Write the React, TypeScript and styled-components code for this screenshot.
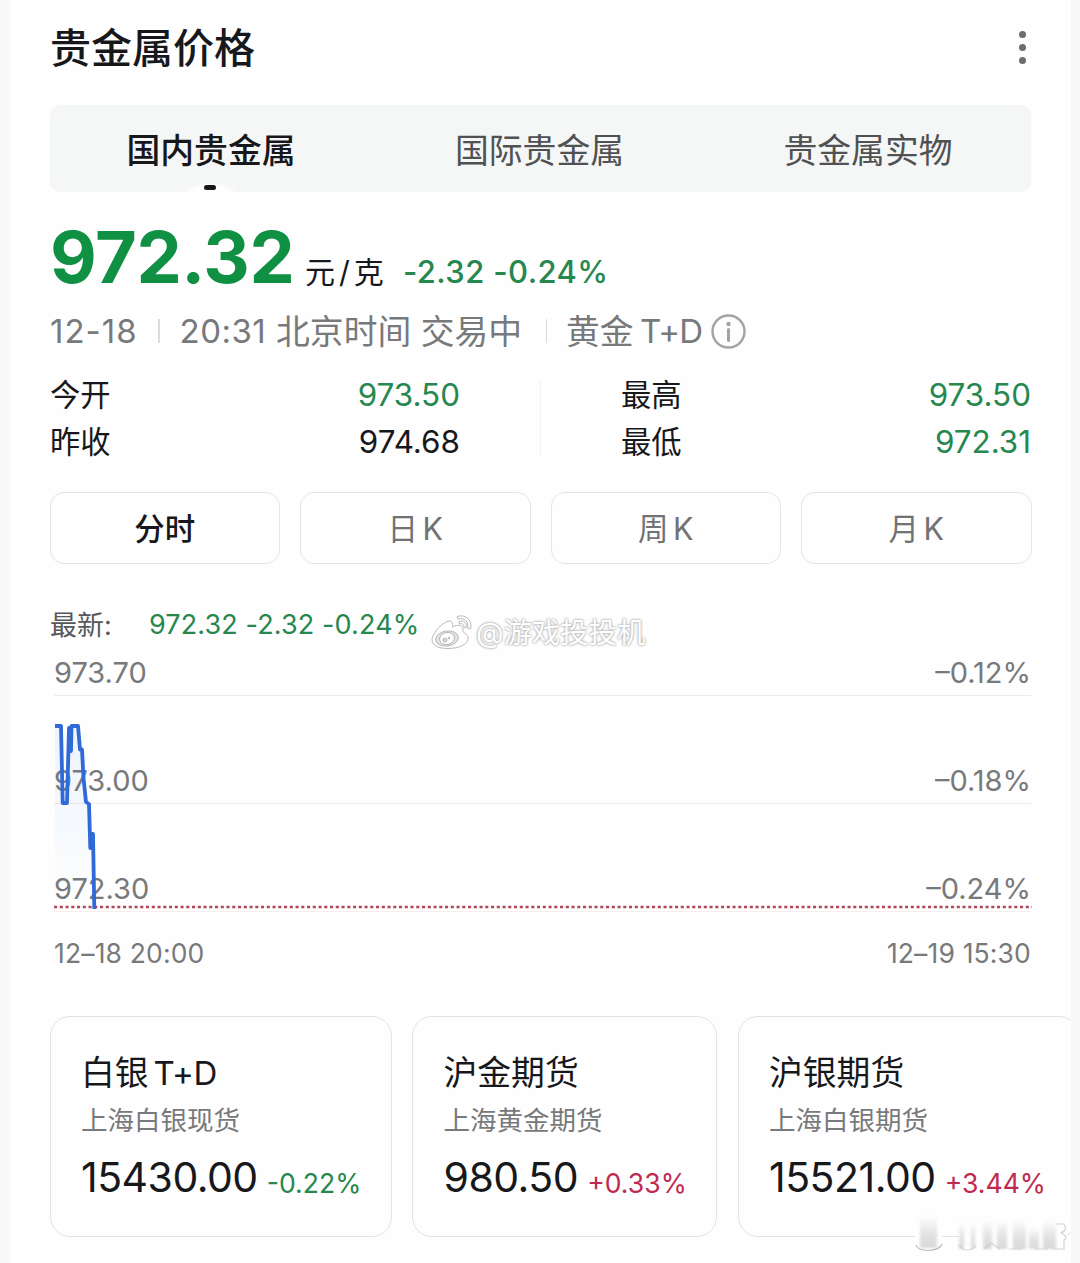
import React from "react";
import styled, { createGlobalStyle } from "styled-components";

const GREEN = "#0f9043";
const GREEN_SOFT = "#26874f";
const RED = "#c02a50";
const INK = "#17181b";
const MUTED = "#77797b";

const GlobalStyle = createGlobalStyle`
  * { box-sizing: border-box; }
  html, body { margin: 0; padding: 0; background: #f8f8f8; }
  body {
    font-family: Inter, "Noto Sans CJK SC", sans-serif;
    color: ${INK};
    overflow: hidden;
  }
`;

const Page = styled.main`
  width: 1061px;
  height: 1263px;
  margin-left: 10px;
  padding: 0 40px;
  background: #fefefe;
  display: flex;
  flex-direction: column;
  position: relative;
  overflow: hidden;
`;

const Header = styled.header`
  display: flex;
  justify-content: space-between;
  align-items: center;
  height: 94px;
  flex: none;
`;

const Title = styled.h1`
  margin: 0;
  font-size: 41px;
  line-height: 94px;
  padding-top: 2px;
  font-weight: 500;
`;

const MoreButton = styled.button`
  display: flex;
  flex-direction: column;
  gap: 6px;
  padding: 0;
  margin-right: 5px;
  border: 0;
  background: none;
`;

const Dot = styled.span`
  width: 7px;
  height: 7px;
  border-radius: 50%;
  background: #6c6c6c;
`;

const Tabs = styled.nav`
  display: grid;
  grid-template-columns: repeat(3, 328.5px);
  justify-content: center;
  height: 87px;
  margin-top: 11px;
  padding-right: 2px;
  flex: none;
  border-radius: 10px;
  background: #f5f6f6;
`;

const Tab = styled.div<{ $active?: boolean }>`
  display: flex;
  flex-direction: column;
  align-items: center;
  font-size: 33.8px;
  line-height: 91px;
  height: 87px;
  color: ${(p) => (p.$active ? INK : "#505153")};
  font-weight: ${(p) => (p.$active ? 500 : 400)};
`;

const TabMark = styled.span`
  width: 56px;
  height: 10px;
  margin: -14px 3px 0 0;
  padding-top: 3px;
  display: flex;
  justify-content: center;
  background: radial-gradient(ellipse at 50% 100%, #fefefe 45%, rgba(254, 254, 254, 0) 70%);

  &::after {
    content: "";
    width: 12px;
    height: 5px;
    border-radius: 2.5px;
    background: ${INK};
  }
`;

const QuoteRow = styled.section`
  display: flex;
  align-items: baseline;
  height: 94px;
  padding-top: 18px;
  flex: none;
  white-space: nowrap;
`;

const BigPrice = styled.span`
  font-size: 72px;
  line-height: 94px;
  font-weight: 700;
  letter-spacing: -0.4px;
  color: ${GREEN};
  width: 255px;
`;

const Unit = styled.span`
  font-size: 30px;
  letter-spacing: 4px;
  width: 98px;
`;

const Change = styled.span`
  font-size: 31px;
  font-weight: 500;
  letter-spacing: 0.4px;
  color: ${GREEN_SOFT};
`;

const MetaRow = styled.section`
  display: flex;
  align-items: center;
  height: 50px;
  margin-top: 20px;
  flex: none;
  font-size: 33px;
  line-height: 50px;
  color: ${MUTED};
  white-space: nowrap;
`;

const Cjk = styled.span`
  font-size: 33.8px;
  letter-spacing: 0;
  vertical-align: -1px;
`;

const MetaPart = styled.span<{ $w: number; $spacing: number; $tight?: boolean }>`
  width: ${(p) => p.$w}px;
  letter-spacing: ${(p) => p.$spacing}px;
  word-spacing: ${(p) => (p.$tight ? "-2px" : "0")};
`;

const MetaRule = styled.i<{ $gap: number }>`
  width: 1.5px;
  height: 24px;
  background: #dcdcdc;
  margin-right: ${(p) => p.$gap}px;
`;

const Stats = styled.section`
  display: grid;
  grid-template-columns: 410px 1fr;
  column-gap: 161px;
  height: 94px;
  margin-top: 15px;
  flex: none;
  position: relative;

  &::after {
    content: "";
    position: absolute;
    left: 490px;
    top: 9px;
    width: 1px;
    height: 76px;
    background: #f1f1f1;
  }
`;

const Stat = styled.div`
  display: flex;
  justify-content: space-between;
  font-size: 30.3px;
  line-height: 47px;
  height: 47px;
`;

const StatLabel = styled.span`
  padding-top: 1px;
`;

const StatValue = styled.span<{ $up?: boolean }>`
  padding-top: 1px;
  font-size: 31.4px;
  color: ${(p) => (p.$up ? GREEN_SOFT : INK)};
`;

const Periods = styled.div`
  display: grid;
  grid-template-columns: repeat(4, 1fr);
  gap: 20px;
  width: 982px;
  margin: 27px 0 0 -0.5px;
  flex: none;
`;

const Period = styled.button<{ $active?: boolean }>`
  height: 72px;
  padding: 1px 0 0;
  border: 1.5px solid #e4e4e5;
  border-radius: 14px;
  background: none;
  font-family: inherit;
  font-size: 30.5px;
  line-height: 70px;
  word-spacing: -4px;
  color: ${(p) => (p.$active ? INK : "#717274")};
  font-weight: ${(p) => (p.$active ? 500 : 400)};
`;

const Latest = styled.div`
  display: flex;
  height: 40px;
  margin-top: 41px;
  flex: none;
  font-size: 27px;
  line-height: 40px;
  color: #56585a;
`;

const LatestLabel = styled.span`
  width: 99px;
  padding-top: 1px;
`;

const LatestValue = styled.span`
  color: ${GREEN_SOFT};
  white-space: nowrap;
  letter-spacing: 0.12px;
`;

const Chart = styled.section`
  width: 977px;
  margin: 4px 0 0 4px;
  flex: none;
  position: relative;
  color: ${MUTED};
`;

const GridRow = styled.div<{ $h: number; $last?: boolean }>`
  height: ${(p) => p.$h}px;
  display: flex;
  justify-content: space-between;
  align-items: flex-end;
  font-size: 29px;
  line-height: 44px;
  border-bottom: 1.5px solid ${(p) => (p.$last ? "#f6eeee" : "#ececec")};
`;

const Plot = styled.svg`
  position: absolute;
  left: 0;
  top: 47px;
  overflow: visible;
`;

const Axis = styled.div`
  display: flex;
  justify-content: space-between;
  height: 40px;
  margin-top: 21px;
  font-size: 26.5px;
  line-height: 40px;
  letter-spacing: 0.15px;
`;

const Cards = styled.section`
  display: flex;
  gap: 20.5px;
  width: 1040px;
  margin: 43px 0 0 -0.5px;
  flex: none;
`;

const Card = styled.article<{ $w: number }>`
  flex: none;
  width: ${(p) => p.$w}px;
  height: 221px;
  padding: 31px 0 0 30.5px;
  border: 1.5px solid #e3e3e4;
  border-radius: 20px;
  white-space: nowrap;
`;

const CardTitle = styled.h2`
  display: flex;
  margin: 0;
  height: 50px;
  font-size: 33.8px;
  line-height: 50px;
  font-weight: 400;
`;

const CardLatin = styled.span`
  margin-left: 5px;
  font-size: 33px;
  letter-spacing: -0.4px;
`;

const CardNote = styled.p`
  margin: 2px 0 0;
  font-size: 26.5px;
  line-height: 40px;
  color: ${MUTED};
`;

const CardPrice = styled.div`
  display: flex;
  align-items: baseline;
  gap: 9px;
  margin-top: 9px;
  font-size: 41px;
  line-height: 56px;
  letter-spacing: -0.5px;
`;

const Percent = styled.span<{ $rise?: boolean }>`
  font-size: 26.6px;
  letter-spacing: 0;
  position: relative;
  top: 1px;
  color: ${(p) => (p.$rise ? RED : GREEN_SOFT)};
`;

const Watermark = styled.div`
  position: absolute;
  left: 421px;
  top: 612px;
  display: flex;
  align-items: center;
  gap: 3px;
  font-size: 28.4px;
  line-height: 42px;
  white-space: nowrap;
  color: #fff;
  text-shadow: 0 0 2px #a2a2a2, 0 0 3px #b4b4b4;
`;

const CornerMark = styled.svg`
  position: absolute;
  left: 895px;
  top: 1205px;
`;

type Quote = { name: string; latin?: string; note: string; price: string; pct: string; rise?: boolean; w: number };

const quotes: Quote[] = [
  { name: "白银", latin: "T+D", note: "上海白银现货", price: "15430.00", pct: "-0.22%", w: 342 },
  { name: "沪金期货", note: "上海黄金期货", price: "980.50", pct: "+0.33%", rise: true, w: 305 },
  { name: "沪银期货", note: "上海白银期货", price: "15521.00", pct: "+3.44%", rise: true, w: 341 },
];

const LINE =
  "M1 30H7L8.7 107H13L15 32L17 55L17.5 30H24L26 53.5H28L29.5 82L32 106L35 108L36.3 152L37.3 138H39L40.3 213";

function WeiboMark() {
  return (
    <svg width="42" height="42" viewBox="0 0 42 42" fill="none" stroke="#b2b2b2" strokeWidth="0.9">
      <path
        fill="#fff"
        d="M1 27C2 20 12 10 18 9C22 9 22 13 21.500 15C26 12.500 33 12 32 19C31.500 21 36 21 37 25C38 33 27 36.500 17 36.500C8 36.500 1 34 1 27Z"
      />
      <ellipse cx="16" cy="26.500" rx="11.500" ry="7.500" fill="#e4e4e4" transform="rotate(-8 16 26.5)" />
      <ellipse cx="16" cy="26.500" rx="7.500" ry="6" fill="#fff" transform="rotate(-12 16 26.5)" />
      <circle cx="14" cy="28" r="2" fill="#d6d6d6" />
      <circle cx="18" cy="26" r="0.8" fill="#c0c0c0" />
      <path fill="#fff" d="M26 4.500C35 1.500 42 9 39.500 17L36.500 16C38.500 10 33 5 27 7Z" />
      <path fill="#fff" d="M28 9.500C33 8 36.500 11 35 16L32.500 15C33.500 12.500 31.500 11 28.500 12Z" />
    </svg>
  );
}

export default function App() {
  return (
    <>
      <GlobalStyle />
      <Page>
        <Header>
          <Title>贵金属价格</Title>
          <MoreButton aria-label="更多">
            <Dot />
            <Dot />
            <Dot />
          </MoreButton>
        </Header>
        <Tabs>
          <Tab $active>
            国内贵金属
            <TabMark />
          </Tab>
          <Tab>国际贵金属</Tab>
          <Tab>贵金属实物</Tab>
        </Tabs>
        <QuoteRow>
          <BigPrice>972.32</BigPrice>
          <Unit>元/克</Unit>
          <Change>-2.32 -0.24%</Change>
        </QuoteRow>
        <MetaRow>
          <MetaPart $w={108} $spacing={1}>
            12-18
          </MetaPart>
          <MetaRule $gap={20} />
          <MetaPart $w={366} $spacing={0.5}>
            20:31 <Cjk>北京时间 交易中</Cjk>
          </MetaPart>
          <MetaRule $gap={19} />
          <MetaPart $w={145} $spacing={-0.8} $tight>
            <Cjk>黄金</Cjk> T+D
          </MetaPart>
          <svg width="35" height="35" viewBox="0 0 35 35" fill="none" stroke="#a2a4a4" strokeWidth="2.4">
            <circle cx="17.5" cy="17.5" r="16" />
            <path d="M17.5 15.5V26.5" strokeWidth="3" strokeLinecap="round" />
            <circle cx="17.5" cy="10" r="2.2" fill="#a2a4a4" stroke="none" />
          </svg>
        </MetaRow>
        <Stats>
          <Stat>
            <StatLabel>今开</StatLabel>
            <StatValue $up>973.50</StatValue>
          </Stat>
          <Stat>
            <StatLabel>最高</StatLabel>
            <StatValue $up>973.50</StatValue>
          </Stat>
          <Stat>
            <StatLabel>昨收</StatLabel>
            <StatValue>974.68</StatValue>
          </Stat>
          <Stat>
            <StatLabel>最低</StatLabel>
            <StatValue $up>972.31</StatValue>
          </Stat>
        </Stats>
        <Periods>
          <Period $active>分时</Period>
          <Period>日 K</Period>
          <Period>周 K</Period>
          <Period>月 K</Period>
        </Periods>
        <Latest>
          <LatestLabel>最新:</LatestLabel>
          <LatestValue>972.32 -2.32 -0.24%</LatestValue>
        </Latest>
        <Chart>
          <GridRow $h={47}>
            <span>973.70</span>
            <span>–0.12%</span>
          </GridRow>
          <GridRow $h={108}>
            <span>973.00</span>
            <span>–0.18%</span>
          </GridRow>
          <GridRow $h={108} $last>
            <span>972.30</span>
            <span>–0.24%</span>
          </GridRow>
          <Plot width="977" height="216" viewBox="0 0 977 216" fill="none">
            <defs>
              <linearGradient id="area" x1="0" y1="0" x2="0" y2="1">
                <stop offset="0" stopColor="#3c8ce6" stopOpacity="0.09" />
                <stop offset="1" stopColor="#3c8ce6" stopOpacity="0" />
              </linearGradient>
            </defs>
            <path d={`${LINE}H1Z`} fill="url(#area)" />
            <path d="M0 211H978" stroke="#b04a58" strokeWidth="2.6" strokeDasharray="3.1 2.65" />
            <path d={LINE} stroke="#3069d8" strokeWidth="3.8" strokeLinejoin="round" />
          </Plot>
          <Axis>
            <span>12–18 20:00</span>
            <span>12–19 15:30</span>
          </Axis>
        </Chart>
        <Cards>
          {quotes.map((q) => (
            <Card key={q.name} $w={q.w}>
              <CardTitle>
                {q.name}
                {q.latin && <CardLatin>{q.latin}</CardLatin>}
              </CardTitle>
              <CardNote>{q.note}</CardNote>
              <CardPrice>
                {q.price}
                <Percent $rise={q.rise}>{q.pct}</Percent>
              </CardPrice>
            </Card>
          ))}
        </Cards>
        <Watermark>
          <WeiboMark />
          <span>@游戏投投机</span>
        </Watermark>
        <CornerMark width="166" height="58" viewBox="0 0 166 58">
          <defs>
            <linearGradient id="fade" x1="0" y1="0" x2="0" y2="1">
              <stop offset="0" stopColor="#c4c4c4" stopOpacity="0" />
              <stop offset="0.6" stopColor="#c4c4c4" stopOpacity="0.5" />
              <stop offset="1" stopColor="#c4c4c4" stopOpacity="0.65" />
            </linearGradient>
            <filter id="soft">
              <feGaussianBlur stdDeviation="1.8 1.2" />
            </filter>
          </defs>
          <path d="M10 16H37V42Q24 50 10 42Z" fill="#fefefe" />
          <rect x="54" y="28" width="108" height="8" fill="#fefefe" />
          <g fill="url(#fade)" filter="url(#soft)">
            <rect x="15" y="11" width="17" height="32" />
            <rect x="54" y="17" width="5" height="27" />
            <rect x="66" y="17" width="4" height="27" />
            <rect x="78" y="15" width="9" height="29" />
            <rect x="92" y="15" width="10" height="29" />
            <rect x="108" y="15" width="13" height="29" />
            <rect x="124" y="22" width="10" height="22" />
            <rect x="138" y="15" width="13" height="29" />
          </g>
          <g fill="none" stroke="#b8b8b8" strokeWidth="1.2">
            <path d="M11 40Q12 45 23 45.500Q35 45 37 39" />
            <path d="M54 40Q57 45 62 45Q68 45 71 40M79 44L86 38L95 44M104 44H118M130 44H143" opacity="0.5" />
            <path d="M151 19H159Q163 25 156 28Q164 32 159 35V44H148" opacity="0.6" />
          </g>
        </CornerMark>
      </Page>
    </>
  );
}
